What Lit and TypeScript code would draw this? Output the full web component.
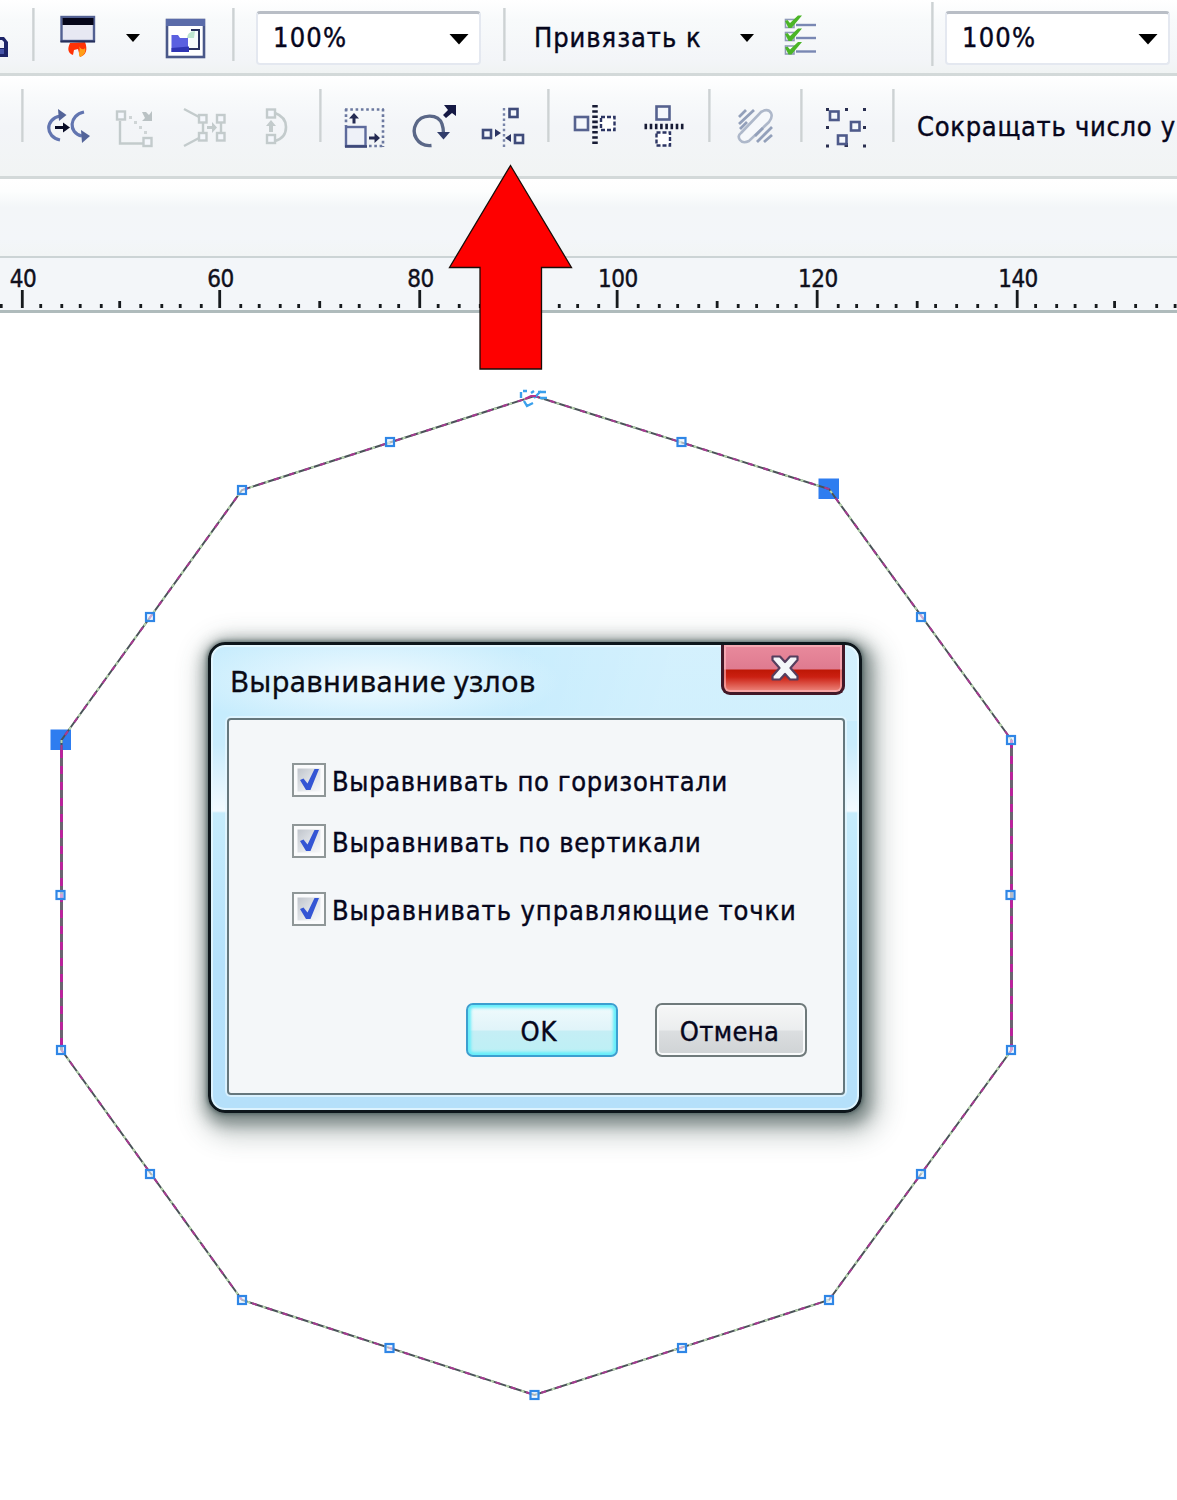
import { LitElement, html, svg, css } from "lit";
import { customElement, property } from "lit/decorators.js";

const NODES: [number, number][] = [
  [829, 489], [1011, 740], [1011, 1050], [829, 1300], [534.5, 1395],
  [242, 1300], [61, 1050], [61, 740], [242, 490],
];
const MID_NODES: [number, number][] = [
  [681.5, 442], [921, 617], [1010.5, 895], [921, 1174], [682, 1348],
  [389.5, 1348], [150, 1174], [60.5, 895], [150, 617], [390, 442],
];
const SELECTED = new Set(["829,489", "61,740"]);

const box = (x: number, y: number, s: number, color = "#56649a", w = 2.4, fill = "#f4f7fc") =>
  svg`<rect x=${x} y=${y} width=${s} height=${s} fill=${fill} stroke=${color} stroke-width=${w}/>`;

@customElement("tool-sep")
class ToolSep extends LitElement {
  static styles = css`
    :host { display: block; width: 3px; height: 53px; margin-top: 8px; background: linear-gradient(90deg, #d9dddf, #cdd2d3 50%, #e6eaec); }
    :host([tall]) { height: 64px; margin-top: 2px; }
  `;
  render() { return html``; }
}

@customElement("zoom-combo")
class ZoomCombo extends LitElement {
  @property() value = "";
  static styles = css`
    :host {
      box-sizing: border-box; display: flex; align-items: center; justify-content: space-between;
      width: 225px; height: 54px; margin-top: 10.5px; padding: 0 10px 0 15px;
      background: #fff; border: 2px solid #e4e8f0; border-top: 3px solid #b9bec6; border-radius: 4px;
      font: 27px/1 "DejaVu Sans Condensed", "DejaVu Sans", sans-serif; color: #06061c;
      -webkit-text-stroke: 0.4px #06061c;
    }
    .value { letter-spacing: 1.2px; margin-top: -2px; }
    svg { margin-top: 2px; }
  `;
  render() {
    return html`<span class="value">${this.value}</span>
      <svg width="20" height="12" viewBox="0 0 20 12"><path d="M0.5 1H19.5L10 11.5Z" fill="#000"/></svg>`;
  }
}

@customElement("check-row")
class CheckRow extends LitElement {
  @property() label = "";
  static styles = css`
    :host { display: flex; align-items: center; height: 34px; gap: 6px; white-space: nowrap;
      font: 27px/34px "DejaVu Sans Condensed", "DejaVu Sans", sans-serif; color: #06061c;
      -webkit-text-stroke: 0.4px #06061c; }
    .text { letter-spacing: var(--track, 0.66px); padding-top: 3px; }
    svg { flex: none; }
  `;
  render() {
    return html`<svg width="34" height="34" viewBox="0 0 34 34">
        <defs><linearGradient id="g" x1="0" y1="0" x2="1" y2="1"><stop offset="0" stop-color="#bfc4cb"/><stop offset=".6" stop-color="#e5e8ec"/><stop offset="1" stop-color="#f6f7f9"/></linearGradient></defs>
        <rect x="1" y="1" width="32" height="32" fill="#fafbfc" stroke="#8f9798" stroke-width="2"/>
        <rect x="5.5" y="5.5" width="23" height="23" fill="url(#g)"/>
        <path d="M8 17L11.500 15.500L15.500 20.500L22.500 6H27L18.500 27H14Z" fill="#3455d4"/>
      </svg><span class="text">${this.label}</span>`;
  }
}

@customElement("align-dialog")
class AlignDialog extends LitElement {
  static styles = css`
    :host {
      box-sizing: border-box; display: flex; flex-direction: column; width: 654px; height: 471px;
      border: 3px solid #0d161b; border-radius: 17px; padding: 0 16px 16px;
      background:
        radial-gradient(ellipse 190px 50px at 160px 36px, rgba(243,251,255,.95), rgba(243,251,255,0)),
        linear-gradient(100deg, rgba(255,255,255,0) 44%, rgba(255,255,255,.2) 70%, rgba(255,255,255,.2) 100%) 0 0 / 100% 76px no-repeat,
        linear-gradient(180deg, #c9edfd 0, #c6ecfd 70px, #c9ecfc 100px, #f2faff 165px, #f2faff 166px, #c6ecfc 168px, #b5e1fb 320px, #b5e0fa 100%);
      box-shadow: inset 0 0 0 2px rgba(235,249,255,.75), 0 0 4px 1px rgba(20,45,45,.5), 3px 5px 14px 7px rgba(40,60,58,.45), 6px 10px 26px 13px rgba(55,75,72,.28);
    }
    .bar { display: flex; justify-content: space-between; align-items: flex-start; height: 73px; flex: none; }
    .title { font: 29px/40px "Noto Sans", "Open Sans", sans-serif; color: #0a0a14; padding: 16px 0 0 3px; letter-spacing: 0.42px; -webkit-text-stroke: 0.3px #0a0a14; }
    .close { display: flex; justify-content: center; align-items: center; box-sizing: border-box; width: 124px; height: 50px;
      margin-right: -2px; padding: 0 0 2px 4px;
      border: 3px solid #421827; border-top: 0; border-radius: 0 0 9px 9px;
      background: linear-gradient(#e98a9c 0, #df7b90 24px, #be1705 25px, #cb2012 32px, #ef8b82 100%);
      box-shadow: inset 0 0 0 2px rgba(255,190,195,.6); }
    .panel { box-sizing: border-box; width: 618px; height: 377px; flex: none; margin-left: 0;
      border: 2px solid #65777d; border-radius: 4px; background: #f4f7f9; padding: 43px 36px 36px 63px;
      box-shadow: 0 0 0 2px rgba(230,247,255,.75); display: flex; flex-direction: column; }
    .second { margin-top: 27px; --track: 0.75px; }
    .third { margin-top: 34px; --track: 0.92px; }
    .actions { display: flex; justify-content: flex-end; gap: 37px; margin-top: auto; }
    .btn { box-sizing: border-box; width: 152px; height: 54px; border-radius: 7px; border: 2px solid #6f7a7b; padding: 3px 3px 0 0;
      font: 27px/48px "DejaVu Sans Condensed", "DejaVu Sans", sans-serif; color: #06061c; text-align: center; letter-spacing: 0.4px;
      -webkit-text-stroke: 0.4px #06061c;
      background: linear-gradient(#f6f7f7 0, #ebedee 50%, #dbdee0 52%, #cfd3d5 100%);
      box-shadow: inset 0 0 0 2px #f8fafb; }
    .ok { border-color: #3c9fd0; padding-right: 6px; letter-spacing: 1px;
      background: linear-gradient(#f0fafc 0, #e0f4f9 50%, #c5eef5 52%, #bcf0f5 100%);
      box-shadow: inset 0 0 3px 3px #66eefa; }
  `;
  render() {
    return html`
      <div class="bar">
        <span class="title">Выравнивание узлов</span>
        <div class="close"><svg width="30" height="28" viewBox="0 0 30 28">
          <path d="M2.500 2.500H10L15 8L20 2.500H27.500V6L20.500 14L27.500 22V25.500H20L15 20L10 25.500H2.500V22L9.500 14L2.500 6Z" fill="#f4f7f9" stroke="#553e5e" stroke-width="2.200" stroke-linejoin="round"/>
        </svg></div>
      </div>
      <div class="panel">
        <check-row label="Выравнивать по горизонтали"></check-row>
        <check-row class="second" label="Выравнивать по вертикали"></check-row>
        <check-row class="third" label="Выравнивать управляющие точки"></check-row>
        <div class="actions"><div class="btn ok">OK</div><div class="btn">Отмена</div></div>
      </div>`;
  }
}

@customElement("app-root")
class AppRoot extends LitElement {
  static styles = css`
    :host { display: flex; flex-direction: column; position: relative; width: 1177px; height: 1500px; overflow: hidden; background: #fff;
      font: 27px/1 "DejaVu Sans Condensed", "DejaVu Sans", sans-serif; color: #06061c; }
    svg { display: block; }
    .bar { display: grid; box-sizing: border-box; flex: none; overflow: hidden; justify-items: start; align-items: start; border-bottom: 3px solid #d3d9d9; }
    .main { height: 76px; grid-template-columns: 32px 26px 66px 38px 70px 24px 247px 31px 204px 42px 151px 14px 232px;
      background: linear-gradient(#fff 0, #f8fafb 20px, #f3f5f8 60px, #f0f3f3 100%); }
    .props { height: 103px; padding-left: 21px; grid-template-columns: 21px 70px 68px 80px 59px 21px 68px 68px 71px 21px 72px 68px 24px 68px 20px 72px 25px 260px;
      background: linear-gradient(#fff 0, #f8fafb 22px, #f3f5f8 50px, #f1f4f4 100%); }
    .props tool-sep { margin-top: 13px; }
    .label { white-space: nowrap; line-height: 32px; -webkit-text-stroke: 0.4px #06061c; }
    .snap { margin-top: 22px; letter-spacing: 0.95px; }
    .reduce { margin-top: 35px; letter-spacing: 0.72px; }
    .tabs { height: 79px; flex: none; box-sizing: border-box; border-bottom: 2px solid #ccd4d5; background: linear-gradient(#fff 0, #fdfefe 12px, #f3f6f8 28px, #f3f6f9 60px, #f2f5f5 100%); }
    .ruler { height: 55px; flex: none; background: #f3f6f9; border-bottom: 3px solid #afbbbc; box-sizing: border-box; }
    .ruler text { font-size: 24px; letter-spacing: -0.5px; fill: #10101c; stroke: #10101c; stroke-width: 0.4px; }
    .canvas { flex: none; }
    .arrow { position: absolute; left: 445px; top: 160px; }
    .dialog { position: absolute; left: 208px; top: 642px; }
  `;

  private caret(x: number) {
    return html`<svg width="18" height="74" viewBox="${x} 0 18 74"><path d="M${x + 2} 34H${x + 16}L${x + 9} 42Z" fill="#000"/></svg>`;
  }

  private mainBar() {
    return html`<div class="bar main">
      <svg width="12" height="74" viewBox="0 0 12 74"><path d="M-4 37H4L8 42V57H-4Z" fill="#1d2468"/><path d="M-4 40H2L4 42V48H-4Z" fill="#eef0fa"/><path d="M-4 49H4V54H-4Z" fill="#4654a8"/></svg>
      <tool-sep></tool-sep>
      <svg width="40" height="74" viewBox="58 0 40 74">
        <path d="M70 43C67 49 68 53 73 55L74 50L78 49L80 57C86 55 88 50 85 42Z" fill="#ff3206"/><path d="M78 45C82 49 77 53 80 57C85 55 86 51 85 48C83 51 80 48 78 45Z" fill="#ff9e18"/>
        <rect x="61.500" y="17" width="32.500" height="24" fill="#e7e8f3" stroke="#526092" stroke-width="2.400"/>
        <rect x="62.500" y="18" width="31" height="7" fill="#050519"/><path d="M60.500 41.500H95" stroke="#26305c" stroke-width="2.200"/>
      </svg>
      ${this.caret(124)}
      <svg width="46" height="74" viewBox="162 0 46 74">
        <rect x="167" y="20" width="37" height="37" fill="#fff" stroke="#4a5889" stroke-width="2.600"/><rect x="166" y="19" width="39" height="7" fill="#5a6ba9"/>
        <path d="M191 30H199V49H189" fill="#f6fafb" stroke="#28305e" stroke-width="2"/><path d="M187 38Q187 32 195 31L194 38Z" fill="#bde4d0"/>
        <path d="M171.500 35H178L180 38L188 38V52H171.500Z" fill="#5b60e0"/><path d="M171.500 48L189 46.500V52H171.500Z" fill="#3035b4"/>
      </svg>
      <tool-sep></tool-sep>
      <zoom-combo value="100%"></zoom-combo>
      <tool-sep></tool-sep>
      <span class="label snap">Привязать к</span>
      ${this.caret(737)}
      <svg width="40" height="74" viewBox="780 0 40 74">
        ${[24.5, 37.5, 51].map((y) => svg`
          <rect x="785.500" y=${y - 5} width="8.500" height="8" fill="#fff" stroke="#8f9bb8" stroke-width="1.600"/>
          <path d="M796 ${y + 0.5}H816" stroke="#7987b3" stroke-width="2.400"/>
          <path d="M785 ${y - 3.5}L787.500 ${y - 4.500}L790 ${y - 1.5}L798 ${y - 9}H802L791.500 ${y + 3.5}H788.500Z" fill="#4bb527"/>`)}
      </svg>
      <tool-sep tall></tool-sep>
      <zoom-combo value="100%"></zoom-combo>
    </div>`;
  }

  private propsBar() {
    const grey = "#c3cbcc";
    const navy = "#2c3563";
    return html`<div class="bar props">
      <tool-sep></tool-sep>
      <svg width="52" height="100" viewBox="42 76 52 100" fill="none" stroke-width="3.200">
        <path d="M60 140C45 137 45 119 60 116" stroke="#6275b0"/><path d="M58 109L66.500 115L59 121Z" fill="#536499"/>
        <path d="M84 112C69 115 68 133 82 136" stroke="#6275b0"/><path d="M81 130L90 136L82 143Z" fill="#536499"/>
        <path d="M55 127.500H65" stroke="#080b26" stroke-width="3"/><path d="M63 122.500L70 127.500L63 132.500Z" fill="#080b26"/>
      </svg>
      <svg width="48" height="100" viewBox="112 76 48 100">
        <path d="M120 121V143.500H143" fill="none" stroke=${grey} stroke-width="2.400"/>
        ${box(117, 111.500, 8, grey, 2.400)}${box(143.500, 138, 8, grey, 2.400)}
        <path d="M129 116h3v3h-3zM134 121h3v3h-3zM139 126h3v3h-3zM144 131h3v3h-3z" fill="#cfd5d6"/>
        <path d="M142 112H146L149 115L152 111V121H142L145 118Z" fill="#bac2c4"/>
      </svg>
      <svg width="54" height="100" viewBox="180 76 54 100" fill="none">
        <path d="M184 109L199 117M184 146L199 138M203 122V133M221 122V133" stroke=${grey} stroke-width="2.400"/>
        ${box(199, 115, 7.500, grey)}${box(199, 133, 7.500, grey)}${box(217, 115, 7.500, grey)}${box(217, 133, 7.500, grey)}
        <path d="M207 126H212V122L217 127.500L212 133V129H207Z" fill=${grey}/>
      </svg>
      <svg width="36" height="100" viewBox="260 76 36 100">
        <path d="M275 113Q286 117 286 127Q286 138 275 141" fill="none" stroke=${grey} stroke-width="2.600"/>
        ${box(267, 109.500, 8, grey)}${box(267, 135, 8, grey)}
        <path d="M271 120L276 126H273V132H269V126H266Z" fill=${grey}/>
      </svg>
      <tool-sep></tool-sep>
      <svg width="48" height="100" viewBox="340 76 48 100">
        <path d="M345 109.500H384M383 109V147M346 109V126M369 146H384" fill="none" stroke="#6b789f" stroke-width="2.600" stroke-dasharray="2.600 2.700"/>
        <rect x="346" y="127" width="19.500" height="19" fill="#eef1f8" stroke="#5d6a9c" stroke-width="2.400"/><path d="M345 146.500H367" stroke="#3d4878" stroke-width="2.600"/>
        <path d="M354 113L359 118.500H355.500V123.500H352.500V118.500H349ZM380 138L374.500 143V139.500H369V136.500H374.500V133Z" fill="#242a52"/>
      </svg>
      <svg width="52" height="100" viewBox="408 76 52 100">
        <path d="M431.500 145.500C417 147 411 133 416 124C421 114 438 113 442 124C443.500 128 443.500 131 443.500 134" fill="none" stroke="#5a6787" stroke-width="3.400"/>
        <path d="M437 132H450L443.500 139.500Z" fill="#313d6a"/><path d="M444 105H456V116L452 113L446 118L443 115L448 110Z" fill="#151944"/>
      </svg>
      <svg width="54" height="100" viewBox="476 76 54 100">
        <path d="M504 108V147" stroke="#7884a8" stroke-width="2.400" stroke-dasharray="2.500 2.700"/>
        ${box(509.500, 109, 8, "#3f4b7a", 2.600)}${box(483, 130, 8, "#3f4b7a", 2.600)}${box(515, 135, 8, "#3f4b7a", 2.600)}
        <path d="M495 129L501 133L495 137ZM511 134V142L505 138Z" fill=${navy}/>
      </svg>
      <tool-sep></tool-sep>
      <svg width="54" height="100" viewBox="568 76 54 100">
        ${box(575, 117, 13, "#56628f", 2.600)}
        <path d="M595 105V145" stroke="#171b34" stroke-width="5.500" stroke-dasharray="2.600 2.600"/>
        <rect x="601" y="117" width="13.500" height="13" fill="#fff" stroke=${navy} stroke-width="2.400" stroke-dasharray="4 2"/>
      </svg>
      <svg width="50" height="100" viewBox="640 76 50 100">
        ${box(656.500, 106.500, 13, "#56628f", 2.600)}
        <path d="M644.500 126.500H685" stroke="#171b34" stroke-width="5.500" stroke-dasharray="2.600 2.600"/>
        <rect x="656.500" y="132.500" width="13.500" height="13" fill="#fff" stroke=${navy} stroke-width="2.400" stroke-dasharray="4 2"/>
      </svg>
      <tool-sep></tool-sep>
      <svg width="46" height="100" viewBox="732 76 46 100" fill="none" stroke="#aeb8ca" stroke-width="2.600">
        <path d="M741 133L761 112Q768 108 771 113Q773 117 769 122L749 141Q743 144 740 140Q737 136 741 133Z" fill="#f6f8fb"/>
        <path d="M739 117L746 110M739 124L754 110M740 129L747 122M757 142L772 127M764 142L772 135M755 136L763 128" stroke="#93a0ba" stroke-width="2.800"/>
      </svg>
      <tool-sep></tool-sep>
      <svg width="50" height="100" viewBox="820 76 50 100">
        <path d="M826 108h3v3h-3zM845 108h3v3h-3zM863 108h3v3h-3zM826 126h3v3h-3zM863 126h3v3h-3zM826 144.500h3v3h-3zM863 144.500h3v3h-3zM844.500 143h3.500v4h-3.500z" fill="#2a2f50"/>
        ${box(830, 111.500, 8.500, "#4e5a8a", 2.600)}${box(851, 122, 8.500, "#4e5a8a", 2.600)}${box(838, 135.500, 8.500, "#4e5a8a", 2.600)}
      </svg>
      <tool-sep></tool-sep>
      <span class="label reduce">Сокращать число у</span>
    </div>`;
  }

  private ruler() {
    // Ticks snap to a grid of 2.632 units, so their gaps alternate slightly.
    const ticks = [];
    for (let i = -1; i <= 58; i++) {
      const x = 22.3 + Math.floor(i * 7.56 + 0.15) * 2.632;
      const major = i % 10 === 0;
      const y = major ? 32 : i % 5 === 0 ? 43 : 46;
      ticks.push(svg`<rect x=${x - 1.4} y=${y} width="2.800" height=${50 - y} fill="#161a1d"/>`);
      if (major) ticks.push(svg`<text x=${x + 0.8} y="29" text-anchor="middle">${40 + i * 2}</text>`);
    }
    return html`<div class="ruler"><svg width="1177" height="52" viewBox="0 0 1177 52">${ticks}</svg></div>`;
  }

  private canvas() {
    const outline = "M534.5 396L829 489L1011.500 740V1050L829 1300L534.500 1395L242 1300L61.500 1050V740L242 490Z";
    return html`<svg class="canvas" width="1177" height="1187" viewBox="0 313 1177 1187">
      ${NODES.filter((n) => SELECTED.has(n.join())).map(([x, y]) => svg`<rect x=${x - 10.5} y=${y - 10.5} width="20.500" height="20.500" fill="#2e7df0"/>`)}
      <path d=${outline} fill="none" stroke="#4a5358" stroke-width="2"/>
      <path d=${outline} fill="none" stroke="#a83a92" stroke-width="2" stroke-dasharray="5 11"/>
      <path d=${outline} fill="none" stroke="#b9d8ae" stroke-width="2" stroke-dasharray="3 13" stroke-dashoffset="-7"/>
      <path d="M61.500 750V1050M1011.500 740V1050" fill="none" stroke="#6b6470" stroke-width="3"/>
      <path d="M61.500 750V1050M1011.500 740V1050" fill="none" stroke="#c21ca0" stroke-width="2.600" stroke-dasharray="8 8"/>
      ${[...NODES.filter((n) => !SELECTED.has(n.join())), ...MID_NODES].map(([x, y]) => svg`<rect x=${x - 4} y=${y - 4} width="8" height="8" fill="#e8f3ff" fill-opacity=".6" stroke="#2f86e6" stroke-width="2.200"/>`)}
      <path d="M521 392V398M523 391H527M524 401L527 406L533 403M531 393L534 391M538 392H546M540 398H547M534 398L541 391" fill="none" stroke="#3aa0ec" stroke-width="2.400"/>
      <path d="M525 399L531 396L536 396" fill="none" stroke="#b5328e" stroke-width="2"/>
    </svg>`;
  }

  render() {
    return html`
      ${this.mainBar()}${this.propsBar()}
      <div class="tabs"></div>
      ${this.ruler()}${this.canvas()}
      <svg class="arrow" width="132" height="214" viewBox="445 160 132 214">
        <path d="M510.500 165.500L571.500 267.500H541.500V369H480V267.500H449.500Z" fill="#fe0000" stroke="#190c08" stroke-width="1.300"/>
      </svg>
      <align-dialog class="dialog"></align-dialog>`;
  }
}
